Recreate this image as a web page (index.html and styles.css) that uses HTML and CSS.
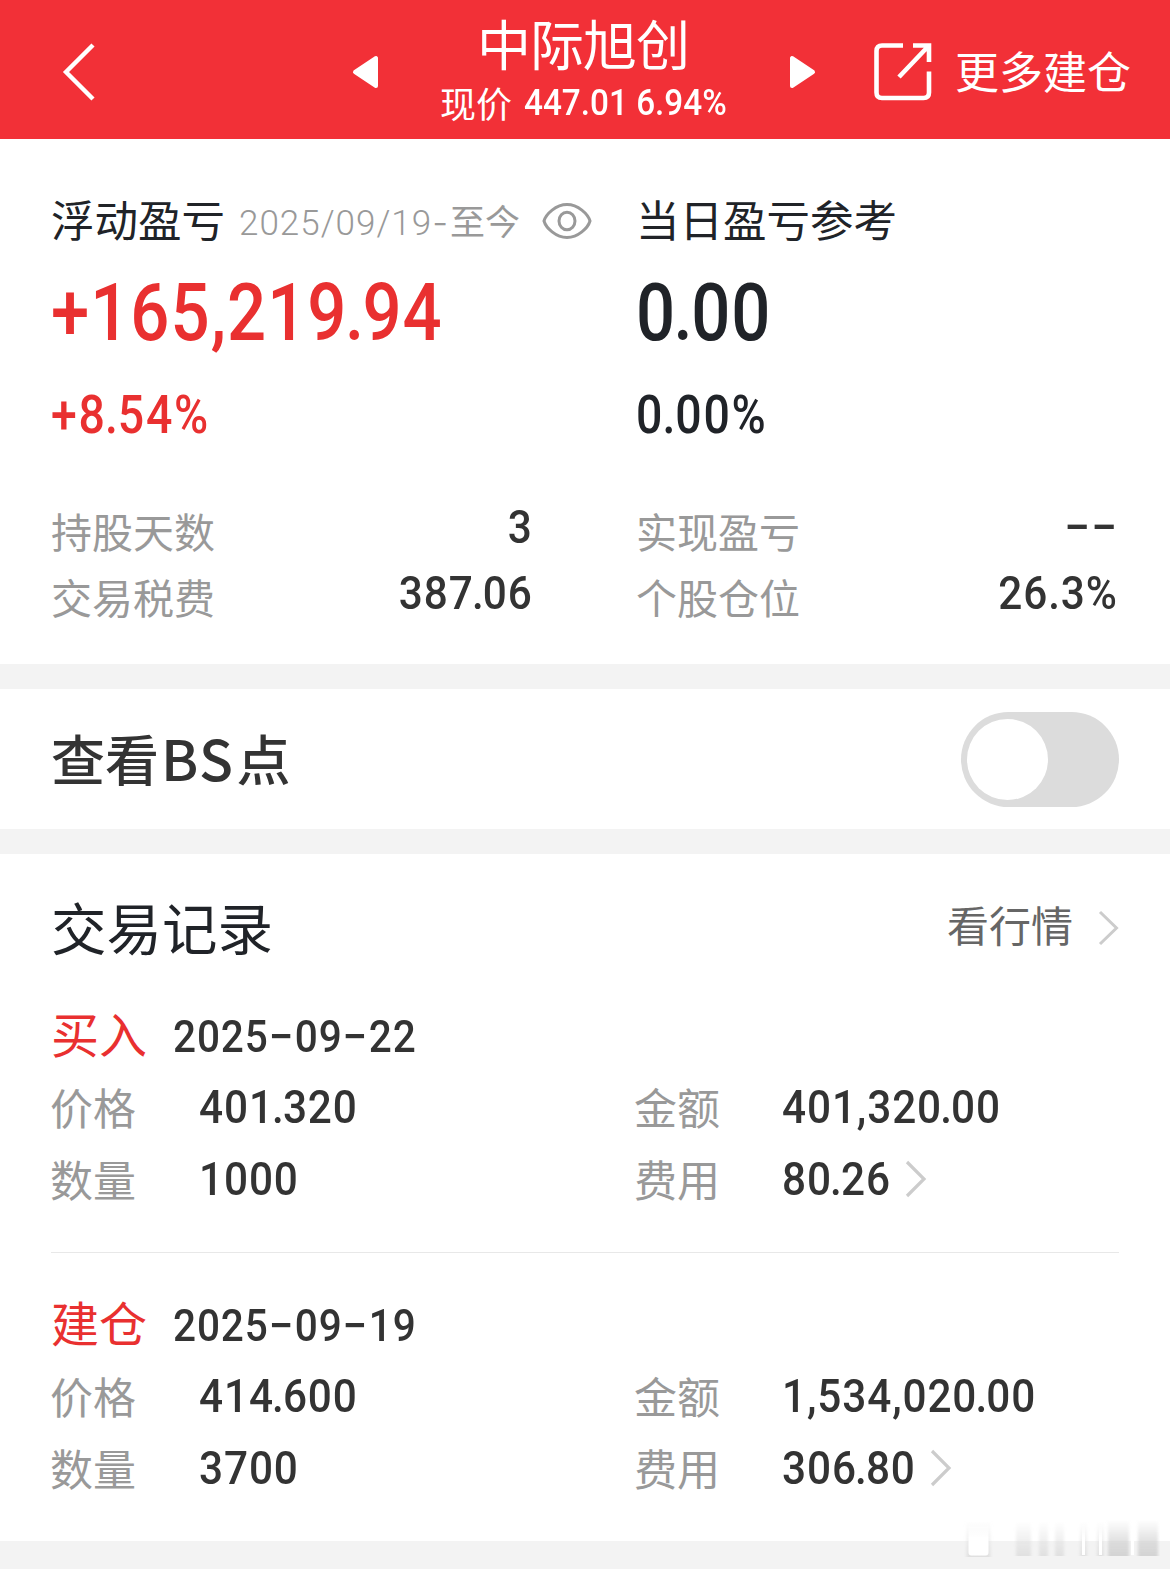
FILE: index.html
```html
<!DOCTYPE html>
<html lang="zh-CN">
<head>
<meta charset="utf-8">
<title>中际旭创</title>
<link rel="stylesheet" href="styles.css">
</head>
<body>
<header class="topbar">
  <svg class="back" width="34" height="60" viewBox="0 0 34 60"><path d="M31 3 4 30 31 57" fill="none" stroke="#fff" stroke-width="4.4"/></svg>
  <svg class="prev" width="28" height="34" viewBox="0 0 28 34"><path d="M3 17 24 3V31Z" fill="#fff" stroke="#fff" stroke-width="4" stroke-linejoin="round"/></svg>
  <div class="stock">
    <h1 class="stock-name">中际旭创</h1>
    <div class="stock-price"><span class="price-label">现价</span><span class="num price-num">447.01 6.94%</span></div>
  </div>
  <svg class="next" width="28" height="34" viewBox="0 0 28 34"><path d="M25 17 4 3V31Z" fill="#fff" stroke="#fff" stroke-width="4" stroke-linejoin="round"/></svg>
  <div class="more">
    <svg width="60" height="60" viewBox="0 0 60 60" fill="none" stroke="#fff" stroke-width="4.6"><path d="M30 3.500H9Q3.500 3.500 3.500 9V50.500Q3.500 56 9 56H50.500Q56 56 56 50.500V29.500M40 3.500H56V20M56 3.500 26 35"/></svg>
    <span class="more-text">更多建仓</span>
  </div>
</header>

<main>
  <section class="summary">
    <div class="col">
      <div class="sum-title">浮动盈亏<span class="range"><span class="range-date">2025/09/19<span class="range-dash">-</span></span>至今</span>
        <svg class="eye" width="50" height="38" viewBox="0 0 50 38" fill="none" stroke="#999" stroke-width="3"><path d="M2 19C4 12 14 2.500 25 2.500S46 12 48 19C46 26 36 35.500 25 35.500S4 26 2 19Z"/><ellipse cx="25" cy="19" rx="8" ry="8.800"/></svg>
      </div>
      <div class="num big red">+165,219<span class="pt">.</span>94</div>
      <div class="num pct red">+8<span class="pt">.</span>54%</div>
      <div class="stat"><span>持股天数</span><span class="num stat-value">3</span></div>
      <div class="stat"><span>交易税费</span><span class="num stat-value">387<span class="pt">.</span>06</span></div>
    </div>
    <div class="col">
      <div class="sum-title">当日盈亏参考</div>
      <div class="num big">0<span class="pt">.</span>00</div>
      <div class="num pct">0<span class="pt">.</span>00%</div>
      <div class="stat"><span>实现盈亏</span><span class="num stat-value"><span class="dash">-</span><span class="dash">-</span></span></div>
      <div class="stat"><span>个股仓位</span><span class="num stat-value">26.3%</span></div>
    </div>
  </section>

  <section class="bs">
    <span class="bs-label">查看<span class="latin">BS</span>点</span>
    <span class="toggle"><span class="knob"></span></span>
  </section>

  <section class="records">
    <div class="rec-title">
      <h2>交易记录</h2>
      <span class="quote">看行情</span>
      <svg class="chev" width="22" height="36" viewBox="0 0 22 36"><path d="M2 2 18.500 18 2 34" fill="none" stroke="#ccc" stroke-width="3"/></svg>
    </div>
    <article class="record">
      <div class="rec-head"><span class="kind">买入</span><span class="num date">2025<span class="dash">-</span>09<span class="dash">-</span>22</span></div>
      <dl class="fields">
        <dt>价格</dt><dd class="num">401<span class="pt">.</span>320</dd><dt>金额</dt><dd class="num">401,320<span class="pt">.</span>00</dd>
        <dt>数量</dt><dd class="num">1000</dd><dt>费用</dt><dd class="fee fee-a"><span class="num">80<span class="pt">.</span>26</span><svg width="22" height="38" viewBox="0 0 22 38"><path d="M2 2 19 19 2 36" fill="none" stroke="#ccc" stroke-width="3.200"/></svg></dd>
      </dl>
    </article>
    <article class="record">
      <div class="rec-head"><span class="kind">建仓</span><span class="num date">2025<span class="dash">-</span>09<span class="dash">-</span>19</span></div>
      <dl class="fields">
        <dt>价格</dt><dd class="num">414<span class="pt">.</span>600</dd><dt>金额</dt><dd class="num">1,534,020<span class="pt">.</span>00</dd>
        <dt>数量</dt><dd class="num">3700</dd><dt>费用</dt><dd class="fee fee-b"><span class="num">306<span class="pt">.</span>80</span><svg width="22" height="38" viewBox="0 0 22 38"><path d="M2 2 19 19 2 36" fill="none" stroke="#ccc" stroke-width="3.200"/></svg></dd>
      </dl>
    </article>
  </section>
</main>

<svg class="mark" width="210" height="50" viewBox="0 0 210 50">
  <defs>
    <linearGradient id="g" x1="0" y1="0" x2="0" y2="1"><stop offset="0" stop-color="#ccc" stop-opacity="0"/><stop offset=".6" stop-color="#ccc" stop-opacity=".6"/><stop offset="1" stop-color="#ccc" stop-opacity=".8"/></linearGradient>
    <linearGradient id="h" x1="0" y1="0" x2="0" y2="1"><stop offset="0" stop-color="#ddd" stop-opacity="0"/><stop offset="1" stop-color="#d8d8d8" stop-opacity=".7"/></linearGradient>
    <linearGradient id="w" x1="0" y1="0" x2="0" y2="1"><stop offset="0" stop-color="#fff" stop-opacity="0"/><stop offset=".5" stop-color="#fff"/></linearGradient>
    <filter id="b"><feGaussianBlur stdDeviation="1.800 .6"/></filter>
  </defs>
  <g filter="url(#b)" fill="url(#h)">
    <rect x="16.500" y="9" width="24" height="37"/><rect x="66" y="9" width="15" height="36"/><rect x="89" y="9" width="9" height="36"/><rect x="105" y="9" width="9" height="36"/>
    <rect x="130" y="9" width="7" height="36"/><rect x="147" y="9" width="7" height="36"/>
  </g>
  <g filter="url(#b)" fill="url(#g)"><rect x="158" y="9" width="21" height="36"/><rect x="188" y="9" width="20" height="36"/></g>
  <g fill="url(#w)"><rect x="18.500" y="9" width="20" height="35.500" rx="3"/><rect x="132" y="9" width="3" height="35"/><rect x="149" y="9" width="3" height="35"/><rect x="181" y="9" width="3" height="35"/></g>
</svg>
</body>
</html>
```

FILE: styles.css
```css
* { box-sizing: border-box; margin: 0; padding: 0; }
body {
  position: relative;
  height: 1569px;
  overflow: hidden;
  background: #f3f3f3;
  color: #202328;
  font-family: "Noto Sans CJK SC", sans-serif;
}
svg { display: block; flex: none; }
h1, h2 { font-weight: 400; }
.num {
  font-family: Roboto, "Noto Sans CJK SC", sans-serif;
  font-weight: 500;
  white-space: nowrap;
  transform: scaleX(.9);
  transform-origin: 0 50%;
}
.dash { display: inline-block; margin: 0 3.6px; font-family: Inter, sans-serif; transform: translateY(-2px) scaleX(1.4); }
.pt { margin: 0 -2px; }
.red { color: #e93030; }

.topbar {
  display: flex;
  align-items: center;
  height: 139px;
  padding: 4px 0 0 62px;
  background: #f23037;
  color: #fff;
}
.prev { margin-left: 256px; }
.stock { flex: none; width: 290px; margin-left: 60px; padding-bottom: 2px; }
.stock-name { height: 62px; padding-left: 37px; font-size: 54px; line-height: 62px; letter-spacing: -1px; }
.stock-price { display: flex; height: 56px; font-size: 36px; line-height: 56px; }
.price-label { flex: none; width: 84px; }
.price-num { padding-top: 1px; font-size: 37px; }
.next { margin-left: 58px; }
.more { display: flex; align-items: center; gap: 22px; margin-left: 57px; }
.more-text { padding-bottom: 4px; font-size: 44px; line-height: 60px; }

.summary { display: flex; height: 525px; padding: 55px 0 0 51px; background: #fff; }
.col { flex: none; width: 585px; }
.sum-title { display: flex; align-items: center; height: 50px; font-size: 43.5px; line-height: 50px; }
.range { display: flex; margin-left: 14px; padding-top: 5px; color: #999; font-size: 35px; }
.range-date { width: 211px; padding-top: 2px; font-family: Roboto, sans-serif; font-weight: 300; letter-spacing: 1px; white-space: nowrap; }
.range-dash { font-family: Inter, sans-serif; }
.eye { margin: 3px 0 0 22px; }
.big { height: 80px; margin-top: 29px; font-size: 80px; line-height: 80px; letter-spacing: 1.2px; transform: scaleX(.86); }
.big .pt { margin: 0 -3px; }
.pct { height: 50px; margin: 37px 0 57px; font-size: 54px; line-height: 50px; letter-spacing: 2px; transform: scaleX(.86); }
.stat { display: flex; align-items: center; width: 480px; height: 66px; color: #999; font-size: 41px; line-height: 66px; }
.stat-value { margin-left: auto; margin-right: -2px; padding-bottom: 7px; color: #333; font-size: 47px; letter-spacing: 1px; transform-origin: 100% 50%; }

.bs { display: flex; align-items: center; justify-content: space-between; height: 140px; margin-top: 25px; padding: 0 51px; background: #fff; }
.bs-label { padding-bottom: 4px; color: #333; font-size: 54px; line-height: 80px; font-weight: 500; }
.latin { margin: 0 2px; font-size: 56px; letter-spacing: 1.5px; }
.toggle { display: flex; align-items: center; width: 158px; height: 95px; padding-left: 6px; border-radius: 48px; background: #dcdcdc; }
.knob { width: 81px; height: 81px; border-radius: 50%; background: #fff; }

.records { height: 687px; margin-top: 25px; padding: 37px 51px 0; background: #fff; }
.rec-title { display: flex; align-items: center; height: 70px; margin-bottom: 3px; line-height: 70px; }
.rec-title h2 { font-size: 55.5px; }
.quote { margin-left: auto; padding-bottom: 5px; color: #666; font-size: 42px; }
.chev { margin: 3px -1px 0 25px; }
.record { padding: 36px 0 38px; }
.record + .record { border-top: 1px solid #e8e8e8; }
.rec-head { display: flex; height: 64px; margin-bottom: 6px; line-height: 64px; }
.kind { width: 122px; color: #e93030; font-size: 48px; }
.date { padding-top: 4px; color: #333; font-size: 45px; letter-spacing: 1px; }
.fields { display: grid; grid-template-columns: 148px 436px 147px 1fr; grid-auto-rows: 72px; align-items: center; font-size: 43px; line-height: 72px; }
.fields dt { margin-left: -1px; color: #999; }
.fields dd { padding-top: 2px; color: #333; font-size: 47px; letter-spacing: 1px; }
.fee { display: flex; align-items: center; }
.fee-a .num { width: 123px; }
.fee-b .num { width: 148px; }

.mark { position: absolute; right: 10px; bottom: 8px; }
```
